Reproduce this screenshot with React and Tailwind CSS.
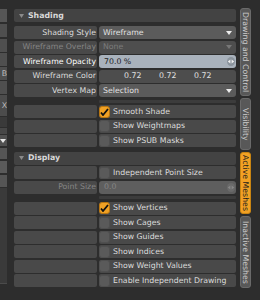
import React from "react";

const Tri = ({ color = "#e4e4e4" }) => (
  <svg width="6" height="4" viewBox="0 0 6 4" className="shrink-0">
    <polygon points="0,0 6,0 3,4" fill={color} />
  </svg>
);

const Header = ({ title }) => (
  <div className="h-[13px] bg-[#434343] rounded-[2px] flex items-center pl-[5px] gap-[4px]">
    <svg width="5" height="4" viewBox="0 0 5 4">
      <polygon points="0,0 5,0 2.5,4" fill="#8a8a8a" />
    </svg>
    <span className="font-bold text-[#d8d8d8] leading-none whitespace-nowrap">{title}</span>
  </div>
);

const LabelRow = ({ label, dim, bright, children }) => (
  <div className="h-[13px] flex gap-[2px]">
    <div
      className={
        "w-[83px] bg-[#494949] rounded-[2px] flex items-center justify-end pr-[1px] leading-none whitespace-nowrap " +
        (dim ? "text-[#858585]" : bright ? "text-[#ffffff]" : "text-[#dcdcdc]")
      }
    >
      {label}
    </div>
    <div className="flex-1 flex">{children}</div>
  </div>
);

const Dropdown = ({ value, dim }) => (
  <div
    className={
      "flex-1 rounded-[3px] flex items-center justify-between pl-[4px] pr-[4px] leading-none " +
      (dim ? "bg-[#4e4e4e] text-[#7c7c7c]" : "bg-[#5b5b5b] text-[#e2e2e2]")
    }
  >
    <span>{value}</span>
    <Tri color={dim ? "#777" : "#ececec"} />
  </div>
);

const Handle = ({ dim }) => (
  <svg width="8" height="9" viewBox="0 0 8 9" className="shrink-0">
    <ellipse cx="4" cy="4.5" rx="4" ry="4.5" fill={dim ? "#6a6a6a" : "#8b949d"} />
    <polygon points="0.8,4.5 3.4,2.4 3.4,6.6" fill={dim ? "#888" : "#f2f2f2"} />
    <polygon points="7.2,4.5 4.6,2.4 4.6,6.6" fill={dim ? "#888" : "#f2f2f2"} />
  </svg>
);

const Slider = ({ value, dim }) => (
  <div
    className={
      "flex-1 rounded-[3px] flex items-center justify-between pl-[5px] pr-[1px] leading-none " +
      (dim ? "bg-[#5e5e5e] text-[#868686]" : "bg-[#a9b2bc] text-[#1c1c1c]")
    }
  >
    <span>{value}</span>
    <Handle dim={dim} />
  </div>
);

const Check = ({ on }) =>
  on ? (
    <div className="w-[11px] h-[12px] rounded-[3px] bg-[#f0a125] border border-[#b87510] flex items-center justify-center shrink-0">
      <svg width="9" height="8" viewBox="0 0 9 8">
        <polyline points="1,4.5 3,7 8,1" fill="none" stroke="#111" strokeWidth="1.8" />
      </svg>
    </div>
  ) : (
    <div className="w-[11px] h-[12px] rounded-[3px] bg-[#5a5a5a] border border-[#4f4f4f] shrink-0" />
  );

const CheckRow = ({ label, on }) => (
  <div className="h-[13px] flex gap-[2px]">
    <div className="w-[83px] bg-[#494949] rounded-[2px]" />
    <div className="flex-1 bg-[#494949] rounded-[2px] flex items-center gap-[3px] text-[#dcdcdc] leading-none whitespace-nowrap">
      <Check on={on} />
      <span>{label}</span>
    </div>
  </div>
);

const Sep = () => (
  <div className="flex my-[1px]">
    <div className="w-[85px]" />
    <div className="flex-1 h-[3px] bg-[#3c3c3c] rounded-[1px]" />
  </div>
);

const Tab = ({ label, h, active }) => (
  <div
    className={
      "w-[11px] rounded-[3px] border flex items-center justify-center leading-none " +
      (active
        ? "bg-[#f2a124] border-[#c98512] text-[#1c1c1c]"
        : "bg-[#585858] border-[#6a6a6a] text-[#cdcdcd]")
    }
    style={{ height: h }}
  >
    <span className="[writing-mode:vertical-rl] whitespace-nowrap">{label}</span>
  </div>
);

const LeftBlock = ({ h, c, children, mt = 0 }) => (
  <div
    className="w-full overflow-hidden flex items-center justify-end text-[#bdbdbd] leading-none"
    style={{ height: h, backgroundColor: c, marginTop: mt }}
  >
    {children}
  </div>
);

export default function App() {
  return (
    <div className="w-[260px] h-[300px] bg-[#2d2d2d] flex overflow-hidden text-[7.8px] font-['DejaVu_Sans','Liberation_Sans',sans-serif]">
      {/* left strip */}
      <div className="w-[7px] flex flex-col pt-[9px]">
        <LeftBlock h={13} c="#565656" />
        <LeftBlock h={13} c="#4f4f4f" mt={2} />
        <LeftBlock h={13} c="#4f4f4f" mt={2} />
        <LeftBlock h={13} c="#4f4f4f" mt={1} />
        <LeftBlock h={13} c="#4f4f4f" mt={1}>
          B
        </LeftBlock>
        <LeftBlock h={13} c="#4f4f4f" mt={1} />
        <LeftBlock h={21} c="#4c4c4c" mt={1}>
          X
        </LeftBlock>
        <LeftBlock h={10} c="#3a3a3a" mt={1} />
        <LeftBlock h={6} c="#474747" mt={1} />
        <LeftBlock h={11} c="#505050" mt={1}>
          <svg width="6" height="4" viewBox="0 0 6 4" className="mr-[1px]">
            <polygon points="0,0 6,0 3,4" fill="#e8e8e8" />
          </svg>
        </LeftBlock>
        <LeftBlock h={11} c="#555" mt={2} />
        <LeftBlock h={12} c="#5a5a5a" mt={2} />
        <LeftBlock h={12} c="#555" mt={2} />
        <LeftBlock h={95} c="#3a3a3a" mt={1} />
        <LeftBlock h={1} c="#4b4b4b" />
      </div>
      <div className="w-[7px]" />

      {/* main panel */}
      <div className="w-[222px] flex flex-col gap-[1.5px] pt-[9px]">
        <Header title="Shading" />
        <div className="h-[1px]" />
        <LabelRow label="Shading Style">
          <Dropdown value="Wireframe" />
        </LabelRow>
        <LabelRow label="Wireframe Overlay" dim>
          <Dropdown value="None" dim />
        </LabelRow>
        <LabelRow label="Wireframe Opacity" bright>
          <Slider value="70.0 %" />
        </LabelRow>
        <LabelRow label="Wireframe Color">
          <div className="flex-1 rounded-[3px] bg-[#4d4d4d] flex items-center pl-[25px] text-[#e0e0e0] leading-none">
            <span className="w-[35px]">0.72</span>
            <span className="w-[35px]">0.72</span>
            <span className="w-[35px]">0.72</span>
          </div>
        </LabelRow>
        <LabelRow label="Vertex Map">
          <Dropdown value="Selection" />
        </LabelRow>
        <Sep />
        <CheckRow label="Smooth Shade" on />
        <CheckRow label="Show Weightmaps" />
        <CheckRow label="Show PSUB Masks" />
        <div className="h-[0px] mt-[1.5px]" />
        <Header title="Display" />
        <CheckRow label="Independent Point Size" />
        <LabelRow label="Point Size" dim>
          <Slider value="0.0" dim />
        </LabelRow>
        <Sep />
        <CheckRow label="Show Vertices" on />
        <CheckRow label="Show Cages" />
        <CheckRow label="Show Guides" />
        <CheckRow label="Show Indices" />
        <CheckRow label="Show Weight Values" />
        <CheckRow label="Enable Independent Drawing" />
      </div>

      <div className="w-[4px]" />
      {/* tabs */}
      <div className="flex flex-col gap-[2px] pt-[8px]">
        <Tab label="Drawing and Control" h={88} />
        <Tab label="Visibility" h={52} />
        <Tab label="Active Meshes" h={62} active />
        <Tab label="Inactive Meshes" h={72} />
      </div>
    </div>
  );
}
